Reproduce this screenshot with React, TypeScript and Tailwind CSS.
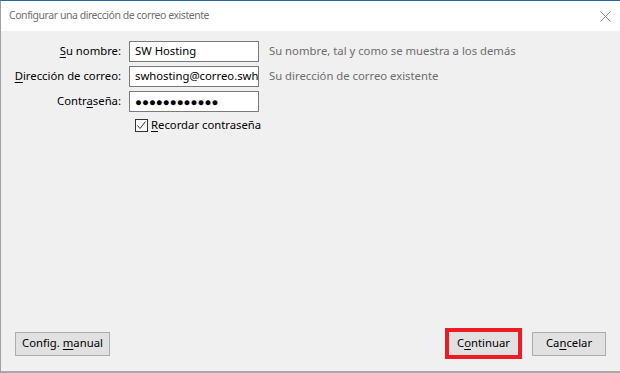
import React from "react"

function U({ children }: { children: React.ReactNode }) {
  return <span className="underline underline-offset-2">{children}</span>
}

const fields = [
  {
    label: <><U>S</U>u nombre:</>,
    value: "SW Hosting",
    hint: "Su nombre, tal y como se muestra a los demás",
  },
  {
    label: <><U>D</U>irección de correo:</>,
    value: "swhosting@correo.swh",
    hint: "Su dirección de correo existente",
  },
  {
    label: <>Contr<U>a</U>seña:</>,
    value: "●●●●●●●●●●●●",
    hint: "",
    secret: true,
  },
]

export default function App() {
  return (
    <div className="w-[620px] h-[373px] flex flex-col bg-[#9a9a9a] text-[11.3px] text-black font-['Noto_Sans',sans-serif] overflow-hidden">
      <div className="h-px bg-[#2b679c]" />
      <div className="flex-1 flex flex-col border-l border-[#a0a0a0]">
        {/* title bar */}
        <div className="h-[30px] bg-white flex items-center justify-between pl-2 pr-[9px]">
          <span className="text-[#707070] text-[10.5px] tracking-[-0.45px]">Configurar una dirección de correo existente</span>
          <svg width="11" height="11" viewBox="0 0 11 11" className="text-[#8a8a8a]">
            <path d="M0.5 0.5L10.5 10.5M10.5 0.5L0.5 10.5" stroke="currentColor" strokeWidth="1" />
          </svg>
        </div>

        {/* body */}
        <div className="flex-1 bg-[#f0f0f0] flex flex-col justify-between pt-[10px] pb-[12px]">
          <div className="flex flex-col gap-[4px]">
            {fields.map((f, i) => (
              <div key={i} className="flex items-center">
                <div className="w-[120px] text-right whitespace-nowrap">{f.label}</div>
                <div
                  className={
                    "ml-[8px] w-[130px] h-[21px] bg-white border border-[#7a7a7a] px-[5px] flex items-center overflow-hidden whitespace-nowrap " +
                    (f.secret ? "text-[11.5px]" : "")
                  }
                >
                  <span>{f.value}</span>
                </div>
                <div className="ml-[10px] text-[#6d6d6d] whitespace-nowrap">{f.hint}</div>
              </div>
            ))}
            <div className="flex items-center pl-[134px] mt-[1px]">
              <div className="w-[13px] h-[13px] border border-[#333] bg-white flex items-center justify-center">
                <svg width="11" height="11" viewBox="0 0 11 11">
                  <path d="M1.5 5.5L4 8.5L9.5 1.5" fill="none" stroke="#333" strokeWidth="1" />
                </svg>
              </div>
              <span className="ml-[3px]"><U>R</U>ecordar contraseña</span>
            </div>
          </div>

          <div className="flex items-center px-[14px]">
            <button className="h-[24px] w-[95px] bg-[#e1e1e1] border border-[#adadad] flex items-center justify-center">
              <span>Config. <U>m</U>anual</span>
            </button>
            <div className="flex-1" />
            <div className="w-[77px] h-[31px] border-4 border-[#ed1c24] bg-[#e1e1e1] flex items-center justify-center">
              <span>C<U>o</U>ntinuar</span>
            </div>
            <button className="ml-[10px] h-[24px] w-[74px] bg-[#e1e1e1] border border-[#adadad] flex items-center justify-center">
              <span>Ca<U>n</U>celar</span>
            </button>
          </div>
        </div>
        <div className="h-[2px] bg-[#a8a8a8]" />
      </div>
    </div>
  )
}
